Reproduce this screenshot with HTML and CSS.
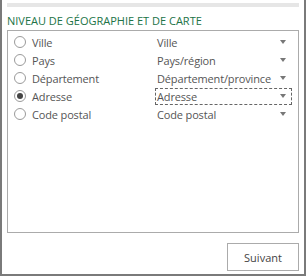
FILE: index.html
```html
<!DOCTYPE html>
<html lang="fr">
<head>
    <meta charset="UTF-8">
    <meta name="viewport" content="width=device-width, initial-scale=1.0">
    <title>Niveau de géographie et de carte</title>
    <link rel="stylesheet" href="styles.css">
</head>
<body>
    <div class="pane">
        <div class="top-bar"></div>

        <h2 class="section-title">NIVEAU DE GÉOGRAPHIE ET DE CARTE</h2>

        <div class="level-list">
            <div class="level-row">
                <span class="radio"></span>
                <span class="level-name">Ville</span>
                <span class="level-select">Ville<span class="arrow"></span></span>
            </div>
            <div class="level-row">
                <span class="radio"></span>
                <span class="level-name">Pays</span>
                <span class="level-select">Pays/région<span class="arrow"></span></span>
            </div>
            <div class="level-row">
                <span class="radio"></span>
                <span class="level-name">Département</span>
                <span class="level-select">Département/province<span class="arrow"></span></span>
            </div>
            <div class="level-row">
                <span class="radio checked"></span>
                <span class="level-name">Adresse</span>
                <span class="level-select focused">Adresse<span class="arrow"></span></span>
            </div>
            <div class="level-row">
                <span class="radio"></span>
                <span class="level-name">Code postal</span>
                <span class="level-select">Code postal<span class="arrow"></span></span>
            </div>
        </div>

        <div class="actions">
            <button class="next-button">Suivant</button>
        </div>
    </div>
</body>
</html>
```

FILE: styles.css
```css
* {
    margin: 0;
    padding: 0;
    box-sizing: border-box;
}

body {
    font-family: "Open Sans", "Noto Sans", Arial, sans-serif;
    background: #fff;
    color: #444;
    width: 306px;
    height: 276px;
    overflow: hidden;
}

.pane {
    width: 306px;
    height: 276px;
    border: 2px solid #7a7a7a;
    border-top: none;
    padding: 3px 5px 0 5px;
    display: flex;
    flex-direction: column;
}

.top-bar {
    height: 4px;
    background: #e6e6e6;
}

.section-title {
    font-size: 11px;
    font-weight: 400;
    color: #217346;
    line-height: 16px;
    margin-top: 6px;
    height: 17px;
}

.level-list {
    border: 1px solid #ababab;
    height: 203px;
    padding: 2px 0 0 6px;
}

.level-row {
    display: flex;
    align-items: center;
    height: 18px;
    font-size: 11px;
    letter-spacing: -0.15px;
}

.radio {
    width: 12px;
    height: 12px;
    border: 1px solid #9a9a9a;
    border-radius: 50%;
    display: flex;
    align-items: center;
    justify-content: center;
    flex-shrink: 0;
}

.radio.checked::after {
    content: "";
    width: 6px;
    height: 6px;
    border-radius: 50%;
    background: #444;
}

.level-name {
    width: 129px;
    padding-left: 6px;
    color: #555;
}

.level-select {
    width: 137px;
    height: 17px;
    display: flex;
    align-items: center;
    justify-content: space-between;
    padding: 0 5px 0 1px;
    border: 1px solid transparent;
    color: #555;
}

.level-select.focused {
    border: 1px dashed #666;
}

.arrow {
    width: 0;
    height: 0;
    border-left: 3.5px solid transparent;
    border-right: 3.5px solid transparent;
    border-top: 4px solid #777;
}

.actions {
    display: flex;
    justify-content: flex-end;
    margin-top: 10px;
}

.next-button {
    width: 72px;
    height: 28px;
    background: #fff;
    border: 1px solid #ababab;
    font-family: inherit;
    font-size: 11px;
    color: #444;
}
```
